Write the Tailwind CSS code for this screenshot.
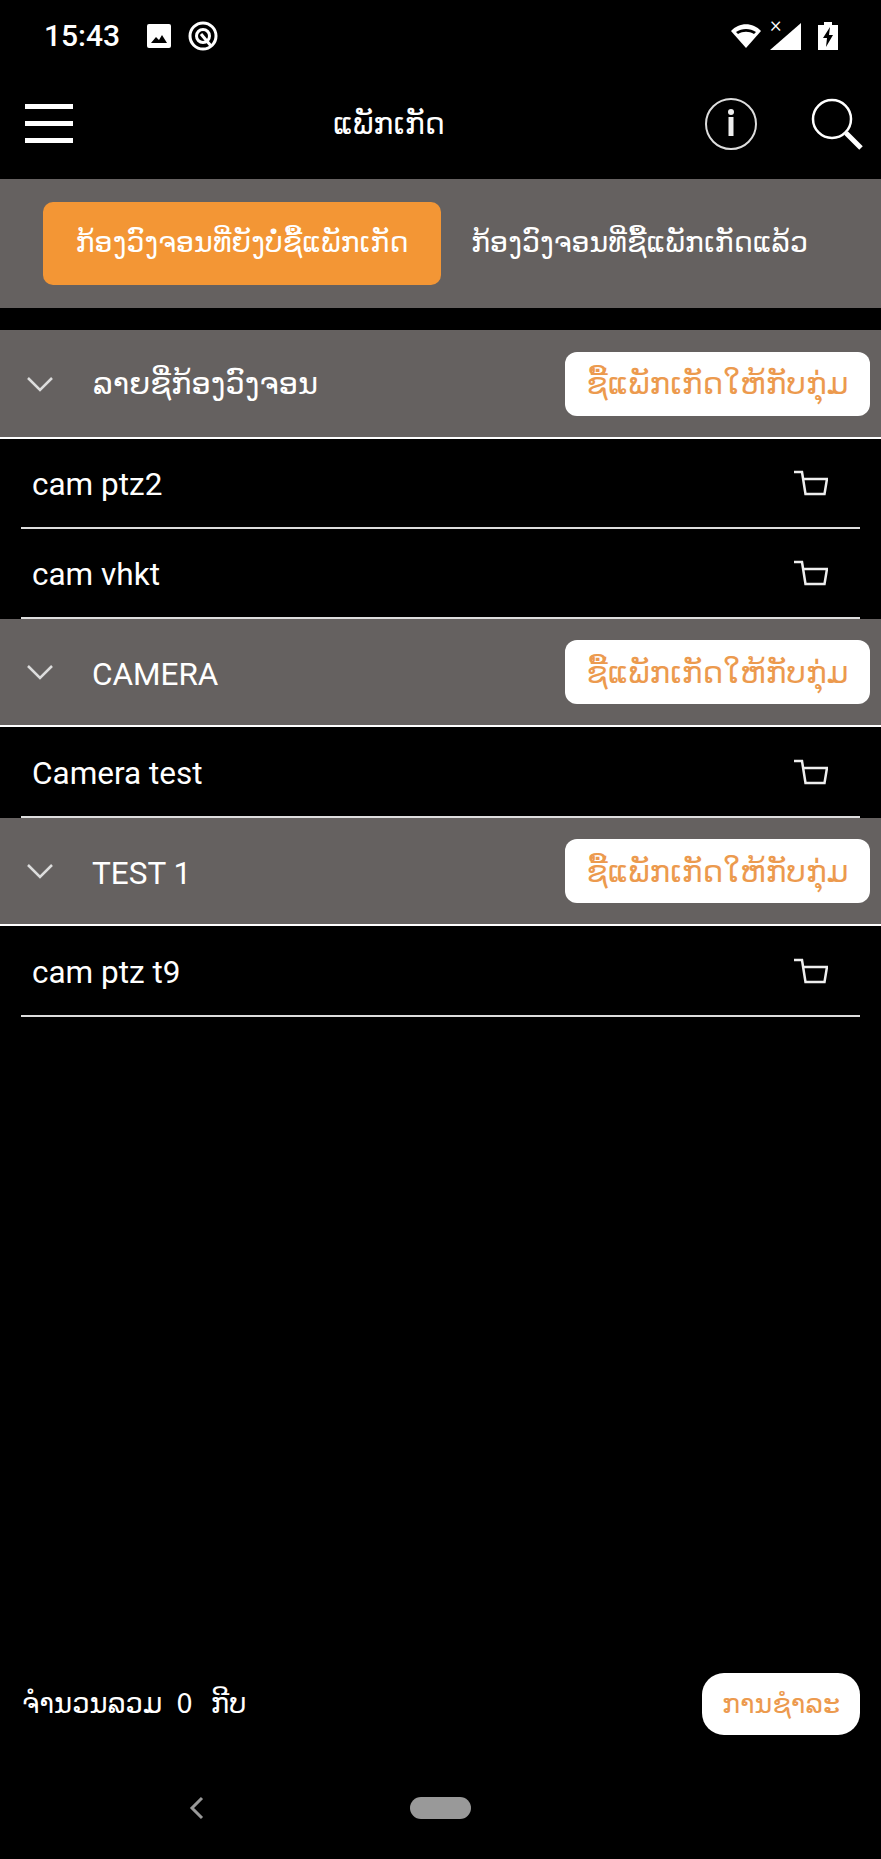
<!doctype html>
<html><head><meta charset="utf-8"><script src="https://cdn.jsdelivr.net/npm/@tailwindcss/browser@4"></script></head>
<body class="bg-black">
<div class="w-[881px] h-[1859px] bg-black text-white flex flex-col overflow-hidden relative font-['Roboto','DejaVu_Sans',sans-serif]">
  <div class="h-[60px] pl-[44px] pr-[43px] pt-[16px] flex items-start justify-between shrink-0">
    <div class="flex items-center h-[40px]">
      <span class="text-[30px] font-medium leading-[40px] w-[102px]">15:43</span>
      <svg width="26" height="26" viewBox="0 0 26 26"><rect x="1" y="1" width="24" height="24" rx="2" fill="#fff"/><path d="M5 20l5-6 3 3 3-5 5 8z" fill="#000"/></svg>
      <svg width="30" height="30" viewBox="0 0 30 30" fill="none" stroke="#fff" stroke-width="3" class="ml-[16px]"><circle cx="15" cy="15" r="13"/><circle cx="15" cy="15" r="6.500"/><path d="M13 13l10 12"/></svg>
    </div>
    <div class="flex items-center h-[40px]">
      <svg width="32" height="26" viewBox="0 0 32 26"><path d="M1 8C9-1 23-1 31 8L16 25z" fill="#fff"/><path d="M6 9c6-4 14-4 20 0l-2 2c-5-3-11-3-16 0z" fill="#000"/></svg>
      <div class="relative w-[32px] h-[28px] ml-[8px]"><svg width="32" height="28" viewBox="0 0 32 28" class="absolute left-0 top-0"><path d="M31 1V28H0z" fill="#fff"/></svg><span class="absolute left-0 -top-[9px] text-[22px] leading-[24px] font-light">×</span></div>
      <svg width="20" height="28" viewBox="0 0 20 28" class="ml-[16px]"><path d="M6 0h8v3h6v25H0V3h6z" fill="#fff"/><path d="M12 5L5 16h4l-1 9 7-12h-4z" fill="#000"/></svg>
    </div>
  </div>

  <div class="h-[119px] relative flex items-center justify-between pl-[25px] pr-[18px] pt-[9px] shrink-0">
    <svg width="48" height="40" viewBox="0 0 48 40" fill="#fff"><rect y="0" width="48" height="5"/><rect y="17" width="48" height="5"/><rect y="34" width="48" height="5"/></svg>
    <span class="absolute left-[333px] top-[46px] text-[30px] leading-[36px] font-['DejaVu_Sans']">ແພັກເກັດ</span>
    <div class="flex items-center gap-[54px]">
      <svg width="52" height="52" viewBox="0 0 52 52" fill="none" stroke="#ddd"><circle cx="26" cy="26" r="25" stroke-width="2"/><rect x="23.500" y="19" width="5" height="19" fill="#eee" stroke="none"/><circle cx="26" cy="14" r="3" fill="#eee" stroke="none"/></svg>
      <svg width="52" height="52" viewBox="0 0 52 52" fill="none" stroke="#fff"><circle cx="21" cy="21" r="19" stroke-width="2.500"/><path d="M35 35l15 15" stroke-width="5"/></svg>
    </div>
  </div>

  <div class="h-[129px] bg-[#656160] flex items-center pl-[43px] shrink-0 font-['DejaVu_Sans']">
    <div class="w-[398px] h-[83px] bg-[#f39635] rounded-[10px] flex items-center justify-center text-[28.5px]">ກ້ອງວົງຈອນທີ່ຍັງບໍ່ຊື້ແພັກເກັດ</div>
    <div class="ml-[30px] text-[28.5px]">ກ້ອງວົງຈອນທີ່ຊື້ແພັກເກັດແລ້ວ</div>
  </div>

  <div class="h-[22px] shrink-0"></div>

  <div class="h-[109px] shrink-0 bg-[#656160] border-b-2 border-white flex items-center justify-between pl-[26px] pr-[11px]">
    <div class="flex items-center gap-[39px]"><svg width="28" height="16" viewBox="0 0 28 16" fill="none" stroke="#ddd" stroke-width="2.500"><path d="M2 2l12 12L26 2"/></svg><span class="text-[30.500px] font-['DejaVu_Sans']">ລາຍຊື່ກ້ອງວົງຈອນ</span></div>
    <div class="w-[305px] h-[64px] bg-white rounded-[12px] text-[#ec9a4e] flex items-center justify-center text-[31px] font-['DejaVu_Sans']">ຊື້ແພັກເກັດໃຫ້ກັບກຸ່ມ</div>
  </div>
  <div class="h-[90px] shrink-0 mx-[21px] border-b-2 border-[#ddd] flex items-center justify-between pl-[11px] pr-[32px] text-[31.500px]"><span class="pt-[4px]">cam ptz2</span><svg width="34" height="26" viewBox="0 0 34 26" fill="none" stroke="#eee" stroke-width="2.500"><path d="M0 2h8l3.500 22h19L33 9H9"/></svg></div>
  <div class="h-[90px] shrink-0 mx-[21px] border-b-2 border-[#ddd] flex items-center justify-between pl-[11px] pr-[32px] text-[31.500px]"><span class="pt-[4px]">cam vhkt</span><svg width="34" height="26" viewBox="0 0 34 26" fill="none" stroke="#eee" stroke-width="2.500"><path d="M0 2h8l3.500 22h19L33 9H9"/></svg></div>

  <div class="h-[108px] shrink-0 bg-[#656160] border-b-2 border-white flex items-center justify-between pl-[26px] pr-[11px]">
    <div class="flex items-center gap-[38px]"><svg width="28" height="16" viewBox="0 0 28 16" fill="none" stroke="#ddd" stroke-width="2.500"><path d="M2 2l12 12L26 2"/></svg><span class="text-[31.500px] pt-[5px]">CAMERA</span></div>
    <div class="w-[305px] h-[64px] bg-white rounded-[12px] text-[#ec9a4e] flex items-center justify-center text-[31px] font-['DejaVu_Sans']">ຊື້ແພັກເກັດໃຫ້ກັບກຸ່ມ</div>
  </div>
  <div class="h-[91px] shrink-0 mx-[21px] border-b-2 border-[#ddd] flex items-center justify-between pl-[11px] pr-[32px] text-[31.500px]"><span class="pt-[4px]">Camera test</span><svg width="34" height="26" viewBox="0 0 34 26" fill="none" stroke="#eee" stroke-width="2.500"><path d="M0 2h8l3.500 22h19L33 9H9"/></svg></div>

  <div class="h-[108px] shrink-0 bg-[#656160] border-b-2 border-white flex items-center justify-between pl-[26px] pr-[11px]">
    <div class="flex items-center gap-[38px]"><svg width="28" height="16" viewBox="0 0 28 16" fill="none" stroke="#ddd" stroke-width="2.500"><path d="M2 2l12 12L26 2"/></svg><span class="text-[31.500px] pt-[5px]">TEST 1</span></div>
    <div class="w-[305px] h-[64px] bg-white rounded-[12px] text-[#ec9a4e] flex items-center justify-center text-[31px] font-['DejaVu_Sans']">ຊື້ແພັກເກັດໃຫ້ກັບກຸ່ມ</div>
  </div>
  <div class="h-[91px] shrink-0 mx-[21px] border-b-2 border-[#ddd] flex items-center justify-between pl-[11px] pr-[32px] text-[31.500px]"><span class="pt-[4px]">cam ptz t9</span><svg width="34" height="26" viewBox="0 0 34 26" fill="none" stroke="#eee" stroke-width="2.500"><path d="M0 2h8l3.500 22h19L33 9H9"/></svg></div>

  <div class="flex-1"></div>
  <div class="h-[62px] shrink-0 flex items-center justify-between pl-[22px] pr-[21px] mb-[31px]">
    <span class="text-[27.500px] whitespace-pre font-['DejaVu_Sans'] flex items-baseline">ຈຳນວນລວມ<span class="text-[26px] ml-[14px] mr-[18px]">0</span>ກີບ</span>
    <div class="w-[158px] h-[62px] bg-white rounded-[22px] text-[#ec9a4e] flex items-center justify-center text-[27px] font-['DejaVu_Sans']">ການຊຳລະ</div>
  </div>
  <div class="h-[93px] shrink-0 relative">
    <svg width="16" height="24" viewBox="0 0 16 24" fill="none" stroke="#999" stroke-width="3" class="absolute left-[189px] top-[30px]"><path d="M13 2L3 12l10 10"/></svg>
    <div class="absolute left-[410px] top-[31px] w-[61px] h-[22px] rounded-full bg-[#999]"></div>
  </div>
</div>
</body></html>
